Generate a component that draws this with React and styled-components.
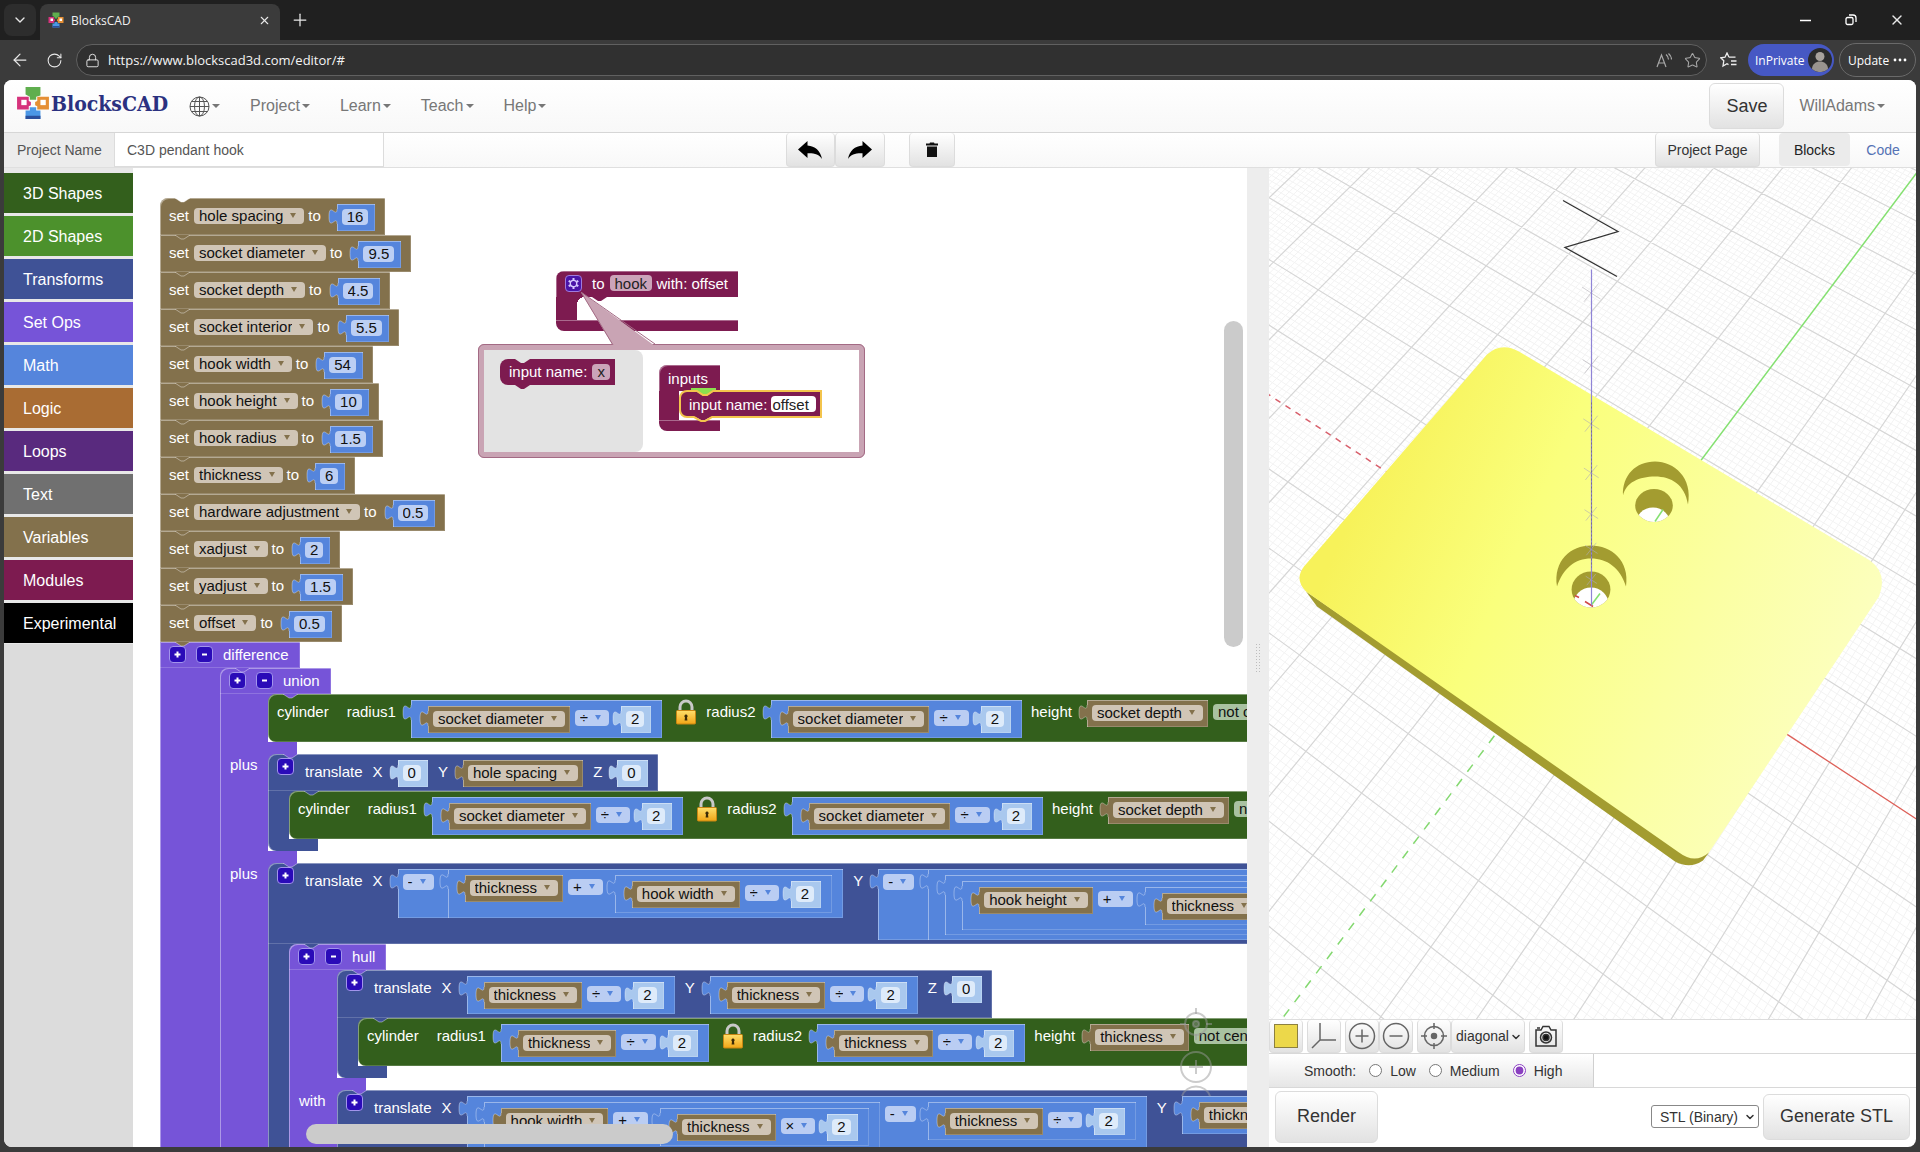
import React, {useState} from "react";
import styled, {createGlobalStyle, css} from "styled-components";
import {ArrowLeft, ChevronDown, Lock, Plus, RotateCw, Star, X} from "lucide-react";

const GlobalStyle = createGlobalStyle`
    * { box-sizing: border-box; }
    body { margin: 0; background: #3b3b3b; }
    body, button, input, select { font-family: "Liberation Sans", Arial, sans-serif; }
    button, input, select { margin: 0; }
`;

const COLORS = {
    variables: '#83714c',
    math: '#5585dc',
    shadow: '#a9c8ee',
    setops: '#7654d8',
    shapes: '#335f1c',
    transforms: '#3f5296',
    modules: '#7d1b50',
};

const CATEGORIES = [
    ['3D Shapes', '#335f1c'],
    ['2D Shapes', '#4c912c'],
    ['Transforms', '#3f5296'],
    ['Set Ops', '#7654d8'],
    ['Math', '#5585dc'],
    ['Logic', '#a96c33'],
    ['Loops', '#592a7e'],
    ['Text', '#707070'],
    ['Variables', '#83714c'],
    ['Modules', '#7d1b50'],
    ['Experimental', '#000000'],
];

const VARIABLES = [
    ['hole spacing', '16'],
    ['socket diameter', '9.5'],
    ['socket depth', '4.5'],
    ['socket interior', '5.5'],
    ['hook width', '54'],
    ['hook height', '10'],
    ['hook radius', '1.5'],
    ['thickness', '6'],
    ['hardware adjustment', '0.5'],
    ['xadjust', '2'],
    ['yadjust', '1.5'],
    ['offset', '0.5'],
];

/* ---------- browser window ---------- */

const Window = styled.div`
    display: flex;
    flex-direction: column;
    height: 100vh;
    background: #3b3b3b;
`;

const TabStrip = styled.div`
    display: flex;
    align-items: flex-end;
    height: 40px;
    flex: none;
    padding-left: 4px;
    background: #202020;
    color: #eee;
`;

const PlainButton = styled.button`
    display: flex;
    align-items: center;
    justify-content: center;
    width: ${props => props.$w || 32}px;
    height: ${props => props.$h || 32}px;
    flex: none;
    padding: 0;
    border: 0;
    border-radius: 8px;
    background: ${props => props.$bg || 'none'};
    color: #e8e8e8;
`;

const TabMenu = styled(PlainButton)`
    align-self: center;
    margin-right: 4px;
`;

const BrowserTab = styled.div`
    display: flex;
    align-items: center;
    width: 240px;
    height: 36px;
    padding: 0 4px 4px 8px;
    border-radius: 8px 8px 0 0;
    background: #3b3b3b;
    font: 12px "Open Sans", "Noto Sans", sans-serif;
    color: #f0f0f0;
`;

const TabTitle = styled.span`
    flex: 1;
    padding-left: 7px;
`;

const WindowButtons = styled.div`
    display: flex;
    align-items: center;
    height: 40px;
    margin-left: auto;
`;

const AddressRow = styled.div`
    display: flex;
    align-items: center;
    height: 40px;
    flex: none;
    padding: 0 4px;
    color: #e8e8e8;
`;

const AddressBar = styled.label`
    display: flex;
    align-items: center;
    flex: 1;
    height: 32px;
    margin: 0 1px 0 4px;
    padding: 0 0 0 8px;
    border: 1px solid #606060;
    border-radius: 16px;
    background: #303030;
`;

const Url = styled.input`
    flex: 1;
    min-width: 0;
    padding: 0 0 0 8px;
    border: 0;
    outline: 0;
    background: none;
    color: #f4f4f4;
    font: 13px "Open Sans", "Noto Sans", sans-serif;
`;

const Pill = styled.button`
    display: flex;
    align-items: center;
    justify-content: space-between;
    height: ${props => props.$h}px;
    width: ${props => props.$w}px;
    flex: none;
    margin-left: ${props => props.$ml || 0}px;
    padding: ${props => props.$pad};
    border: ${props => props.$border};
    border-radius: 17px;
    background: ${props => props.$bg};
    color: #fff;
    font: 12px "Open Sans", "Noto Sans", sans-serif;
    white-space: nowrap;
`;

const Page = styled.div`
    display: flex;
    flex-direction: column;
    flex: 1;
    min-height: 0;
    margin: 0 4px 5px;
    border-radius: 8px;
    overflow: hidden;
    background: #fff;
    color: #333;
`;

/* ---------- site bars ---------- */

const NavBar = styled.nav`
    display: flex;
    align-items: center;
    height: 53px;
    flex: none;
    padding: 0 16px 0 12px;
    border-bottom: 1px solid #d6d6d6;
    background: linear-gradient(#fff, #f8f8f8);
`;

const Brand = styled.a`
    display: flex;
    align-items: center;
    gap: 1px;
    margin-right: 6px;
    padding-bottom: 6px;
    color: #2b3180;
    text-decoration: none;
    font: bold 21px "DejaVu Serif Condensed", "DejaVu Serif", serif;
`;

const NavItem = styled.button`
    display: flex;
    align-items: center;
    gap: 2px;
    padding: 0 15px;
    border: 0;
    background: none;
    color: #777;
    font-size: 16px;
`;

const Caret = styled.span`
    border: 4px solid transparent;
    border-top-color: #777;
    border-bottom: 0;
`;

const Spacer = styled.div`
    flex: 1;
`;

const raised = css`
    border: 1px solid #dcdcdc;
    border-radius: 4px;
    background: linear-gradient(#fff, #e2e2e2);
    color: #333;
`;

const BigButton = styled.button`
    ${raised}
    height: ${props => props.$h}px;
    padding: 0 16px;
    border-radius: 6px;
    font-size: 18px;
    white-space: nowrap;
`;

const ProjectBar = styled.div`
    display: flex;
    align-items: stretch;
    height: 35px;
    flex: none;
    border-bottom: 1px solid #dfdfdf;
    background: linear-gradient(#fff, #f8f8f8);
    font-size: 14px;
`;

const ProjectLabel = styled.label`
    display: flex;
    align-items: center;
    width: 110px;
    padding-left: 13px;
    background: #ececec;
    color: #555;
`;

const ProjectInput = styled.input`
    width: 270px;
    padding: 0 12px;
    border: 1px solid #dcdcdc;
    border-top: 0;
    background: #fff;
    color: #555;
    font-size: 14px;
`;

const EditButtons = styled.div`
    display: flex;
    margin: 0 auto 0 21%;
`;

const BarButton = styled.button`
    ${raised}
    display: flex;
    align-items: center;
    justify-content: center;
    width: ${props => props.$w}px;
    height: 34px;
    margin-right: ${props => props.$mr || 0}px;
    padding: 0;
    border-top: 0;
    font-size: 14px;
`;

const ViewTab = styled.button`
    width: ${props => props.$w}px;
    height: 33px;
    padding: 0;
    border: 0;
    border-radius: 4px;
    background: ${props => props.$active ? '#ebebeb' : 'none'};
    color: ${props => props.$active ? '#222' : '#5573b5'};
    font-size: 14px;
`;

/* ---------- editor ---------- */

const Editor = styled.div`
    display: flex;
    flex: 1;
    min-height: 0;
`;

const Toolbox = styled.div`
    display: flex;
    flex-direction: column;
    gap: 3px;
    width: 129px;
    flex: none;
    padding-top: 5px;
    background: linear-gradient(#e8e8e8 476px, #dcdcdc 476px);
`;

const Category = styled.button`
    height: 40px;
    flex: none;
    padding: 2px 0 0 19px;
    border: 0;
    background: ${props => props.$color};
    color: #fff;
    font-size: 16px;
    text-align: left;
`;

const Workspace = styled.div`
    position: relative;
    flex: 1114 1 0;
    min-width: 0;
    overflow: hidden;
    background: #fff;
`;

const Splitter = styled.div`
    display: flex;
    align-items: center;
    justify-content: center;
    width: 22px;
    flex: none;
    background: #ededed;
`;

const Grip = styled.div`
    width: 6px;
    height: 30px;
    background: radial-gradient(circle, #bdbdbd 1px, transparent 1px) 0 0 / 3px 3px;
`;

const Scrollbar = styled.div`
    position: absolute;
    left: ${props => props.$x}px;
    top: ${props => props.$y}px;
    right: ${props => props.$right}px;
    bottom: ${props => props.$bottom}px;
    width: ${props => props.$w}px;
    height: ${props => props.$h}px;
    border-radius: 10px;
    background: #cbcbcb;
`;

const ZoomControls = styled.svg`
    position: absolute;
    right: 34px;
    bottom: 48px;
`;

/* ---------- blocks ---------- */

const edge = css`
    box-shadow: inset 1px 1px 0 rgba(255, 255, 255, .4), inset -1px -1px 0 rgba(255, 255, 255, .18);
`;

// a root block on the free canvas
const Placed = styled.div`
    position: absolute;
    left: ${props => props.$x}px;
    top: ${props => props.$y}px;
    display: flex;
    flex-direction: column;
    align-items: flex-start;
    color: #fff;
    font-size: 15px;
    white-space: nowrap;
`;

const Label = styled.span`
    margin: 6px 0 0 ${props => props.$ml ?? 10}px;
    line-height: 23px;
    color: #fff;
`;

const FieldBox = styled.span`
    position: relative;
    display: flex;
    height: 16px;
    margin: ${props => props.$mt ?? 10}px 0 0 ${props => props.$ml ?? 5}px;
    border-radius: 4px;
    background: ${props => props.$bg};
    color: ${props => props.$arrow};

    select, input {
        field-sizing: content;
        height: 16px;
        padding: 0 ${props => props.$arrow ? 21 : 5}px 0 5px;
        border: 0;
        border-radius: 4px;
        outline: 0;
        background: none;
        appearance: none;
        color: #111;
        font-size: 15px;
        line-height: 16px;
    }
`;

const Arrow = styled.span`
    position: absolute;
    right: 8px;
    top: 5px;
    border: 3px solid transparent;
    border-top: 5px solid currentColor;
    border-bottom: 0;
    pointer-events: none;
`;

const Value = styled.div`
    position: relative;
    display: flex;
    align-items: flex-start;
    min-height: 27px;
    margin: ${props => props.$flush ? 0 : 6}px 0 0 ${props => props.$ml ?? 15}px;
    padding: ${props => props.$pad};
    background: ${props => props.$color};
    ${edge}
`;

const TabShape = styled.svg`
    position: absolute;
    left: -8px;
    top: 5px;
    overflow: visible;
`;

const Statement = styled.div`
    position: relative;
    display: flex;
    align-items: flex-start;
    min-height: ${props => props.$h || 37}px;
    padding: 0 10px 4px 0;
    border-radius: ${props => props.$radius || '0'};
    background: ${props => props.$color};
    ${edge}
`;

const Header = styled(Statement)`
    padding: 0 11px 2px 9px;
    align-items: center;
    gap: 10px;
`;

const NotchShape = styled.svg`
    position: absolute;
    left: 15px;
    top: 0;
`;

const Column = styled.div`
    display: flex;
    flex-direction: column;
    align-items: flex-start;
`;

const Section = styled.div`
    display: flex;
`;

const Spine = styled.div`
    width: ${props => props.$w}px;
    flex: none;
    padding: 0 0 0 10px;
    background: ${props => props.$color};
    box-shadow: inset 1px 0 0 rgba(255, 255, 255, .4);
    line-height: 22px;
`;

const Mouth = styled.div`
    min-width: 29px;
    background: linear-gradient(${props => props.$color}, ${props => props.$color}) 0 0 / 10px 10px no-repeat;
`;

const Arm = styled.div`
    width: ${props => props.$w}px;
    height: 12px;
    border-radius: 0 0 0 ${props => props.$end ? 8 : 0}px;
    background: ${props => props.$color};
    box-shadow: inset 1px 0 0 rgba(255, 255, 255, .4);
`;

const RoundButton = styled.button`
    display: flex;
    align-items: center;
    justify-content: center;
    width: 17px;
    height: 17px;
    flex: none;
    margin: ${props => props.$m || 0};
    padding: 0;
    border: 1px solid #a294ec;
    border-radius: 4px;
    background: #2a0bb8;
`;

const PlusMinus = ({minus, m}) => (
    <RoundButton $m={m} aria-label={minus ? 'remove input' : 'add input'}>
        <svg width="9" height="9" viewBox="0 0 9 9">
            <path d={minus ? 'M2 4.5h5' : 'M1.5 4.5h6M4.5 1.5v6'} stroke="#fff" strokeWidth="2"/>
        </svg>
    </RoundButton>
);

const PuzzleTab = ({color}) => (
    <TabShape width="9" height="15" viewBox="0 0 9 15">
        <path d="M9 0H8c0 10-8-8-8 7.5s8-2.5 8 7.5h1z" fill={color}/>
        <path d="M8 0c0 10-8-8-8 7.5s8-2.5 8 7.5" fill="none" stroke="#fff" strokeOpacity=".35"/>
    </TabShape>
);

const Notch = ({fill}) => (
    <NotchShape width="16" height="5" viewBox="0 0 16 5">
        <path d="M0 0l6 4h3l6-4" fill={fill} stroke="#fff" strokeOpacity=".4"/>
    </NotchShape>
);

const Drop = ({value, name, bg, arrow, ml, mt}) => (
    <FieldBox $bg={bg} $arrow={arrow} $ml={ml} $mt={mt}>
        <select aria-label={name} defaultValue={value}>
            <option>{value}</option>
        </select>
        <Arrow/>
    </FieldBox>
);

const VarField = props => <Drop bg="#d0c5b6" arrow="#83714c" name="variable" {...props}/>;
const Op = props => <Drop bg="#bacdf3" arrow="#5585dc" name="operator" {...props}/>;

const Var = ({name, ml}) => (
    <Value $color={COLORS.variables} $ml={ml} $pad="0 5px 0 0">
        <PuzzleTab color={COLORS.variables}/>
        <VarField value={name} mt={5}/>
    </Value>
);

const Num = ({value, shadow, ml}) => {
    const color = shadow ? COLORS.shadow : COLORS.math;
    return (
        <Value $color={color} $ml={ml} $pad="0 7px 0 0">
            <PuzzleTab color={color}/>
            <FieldBox $bg={shadow ? '#deebfa' : '#bccff4'} $mt={5}>
                <input aria-label="number" defaultValue={value} size={value.length}/>
            </FieldBox>
        </Value>
    );
};

// children: left operand and right operand
const Math2 = ({op, ml, flush, children}) => {
    const [left, right] = React.Children.toArray(children);
    return (
        <Value $color={COLORS.math} $ml={ml} $flush={flush} $pad="0 11px 5px 2px">
            <PuzzleTab color={COLORS.math}/>
            {left}
            <Op value={op}/>
            {React.cloneElement(right, {ml: 12})}
        </Value>
    );
};

const Half = ({name, ml}) => (
    <Math2 op="÷" ml={ml}>
        <Var name={name}/>
        <Num value="2" shadow/>
    </Math2>
);

const Negate = ({children}) => (
    <Value $color={COLORS.math} $pad="0">
        <PuzzleTab color={COLORS.math}/>
        <Op value="-" mt={5}/>
        {React.cloneElement(children, {ml: 14, flush: true})}
    </Value>
);

const LockIcon = styled.svg`
    flex: none;
    margin: 5px 0 0 14px;
`;

const Padlock = () => (
    <LockIcon width="20" height="26" viewBox="0 0 20 26">
        <defs>
            <linearGradient id="lockBody" x1="0" y1="0" x2="0" y2="1">
                <stop offset="0" stopColor="#ffdf6b"/>
                <stop offset="1" stopColor="#f2a516"/>
            </linearGradient>
        </defs>
        <path d="M4 13V8a6 6 0 0 1 12 0v5" fill="none" stroke="#c9c9c9" strokeWidth="3"/>
        <rect x="0.5" y="11.5" width="19" height="13.5" rx="1" fill="url(#lockBody)" stroke="#c98613"/>
        <path d="M10 15.5a1.700 1.700 0 0 1 1 3l.4 3H8.600l.4-3a1.700 1.700 0 0 1 1-3z" fill="#3c2a06"/>
    </LockIcon>
);

const Cylinder = ({radius, height, notch}) => (
    <Statement $color={COLORS.shapes} $radius="8px 0 0 8px">
        <Notch fill={notch}/>
        <Label $ml={9}>cylinder</Label>
        <Label $ml={18}>radius1</Label>
        <Half name={radius}/>
        <Padlock/>
        <Label>radius2</Label>
        <Half name={radius}/>
        <Label $ml={9}>height</Label>
        <Var name={height}/>
        <Drop name="centering" value="not centered" bg="#a9c2a1" arrow={COLORS.shapes} mt={10}/>
    </Statement>
);

const SetOp = ({name, indent, sections, notch, radius}) => (
    <Column>
        <Header $color={COLORS.setops} $h={26} $radius={radius}>
            <Notch fill={notch}/>
            <PlusMinus/>
            <PlusMinus minus/>
            <span>{name}</span>
        </Header>
        {sections.map(([label, child], i) => (
            <React.Fragment key={i}>
                <Section>
                    <Spine $w={indent} $color={COLORS.setops}>{label}</Spine>
                    <Mouth $color={COLORS.setops}>{child}</Mouth>
                </Section>
                <Arm $w={indent + 29} $color={COLORS.setops}/>
            </React.Fragment>
        ))}
    </Column>
);

const Translate = ({x, y, z, children}) => (
    <Column>
        <Statement $color={COLORS.transforms} $radius="8px 0 0 0">
            <Notch fill={COLORS.setops}/>
            <PlusMinus m="4px 0 0 9px"/>
            <Label $ml={11}>translate</Label>
            <Label>X</Label>
            {x}
            <Label>Y</Label>
            {y}
            <Label>Z</Label>
            {z}
        </Statement>
        <Section>
            <Spine $w={21} $color={COLORS.transforms}/>
            <Mouth $color={COLORS.transforms}>{children}</Mouth>
        </Section>
        <Arm $w={50} $color={COLORS.transforms} $end/>
    </Column>
);

const Zero = () => <Num value="0" shadow/>;

const Hull = () => (
    <SetOp name="hull" indent={48} radius="8px 0 0 0" notch={COLORS.transforms} sections={[
        ['', (
            <Translate x={<Half name="thickness"/>} y={<Half name="thickness"/>} z={<Zero/>}>
                <Cylinder radius="thickness" height="thickness" notch={COLORS.transforms}/>
            </Translate>
        )],
        ['with', (
            <Translate
                x={(
                    <Math2 op="-">
                        <Math2 op="+">
                            <Var name="hook width"/>
                            <Math2 op="×">
                                <Var name="thickness"/>
                                <Num value="2" shadow/>
                            </Math2>
                        </Math2>
                        <Half name="thickness"/>
                    </Math2>
                )}
                y={<Half name="thickness"/>}
                z={<Zero/>}
            >
                <Cylinder radius="thickness" height="thickness" notch={COLORS.transforms}/>
            </Translate>
        )],
    ]}/>
);

const Union = () => (
    <SetOp name="union" indent={48} radius="8px 0 0 0" notch={COLORS.setops} sections={[
        ['', <Cylinder radius="socket diameter" height="socket depth" notch={COLORS.setops}/>],
        ['plus', (
            <Translate x={<Zero/>} y={<Var name="hole spacing"/>} z={<Zero/>}>
                <Cylinder radius="socket diameter" height="socket depth" notch={COLORS.transforms}/>
            </Translate>
        )],
        ['plus', (
            <Translate
                x={(
                    <Negate>
                        <Math2 op="+">
                            <Var name="thickness"/>
                            <Half name="hook width"/>
                        </Math2>
                    </Negate>
                )}
                y={(
                    <Negate>
                        <Math2 op="-">
                            <Math2 op="-">
                                <Math2 op="+">
                                    <Var name="hook height"/>
                                    <Half name="thickness"/>
                                </Math2>
                                <Num value="2" shadow/>
                            </Math2>
                            <Num value="2" shadow/>
                        </Math2>
                    </Negate>
                )}
                z={<Zero/>}
            >
                <Hull/>
            </Translate>
        )],
    ]}/>
);

const MainStack = () => (
    <Placed $x={27} $y={30}>
        {VARIABLES.map(([name, value], i) => (
            <Statement key={name} $color={COLORS.variables} $radius={i ? '0' : '8px 0 0 0'}>
                <Notch fill={i ? COLORS.variables : '#fff'}/>
                <Label $ml={9}>set</Label>
                <VarField value={name} ml={5}/>
                <Label $ml={4}>to</Label>
                <Num value={value} ml={16}/>
            </Statement>
        ))}
        <SetOp name="difference" indent={60} notch={COLORS.variables} sections={[['', <Union/>]]}/>
    </Placed>
);

/* ---------- module block and its mutator bubble ---------- */

const ModuleFrame = styled.div`
    display: flex;
    flex-direction: column;
    border-radius: 8px 0 0 8px;
    overflow: hidden;
`;

const ModuleHead = styled.div`
    display: flex;
    align-items: center;
    height: 26px;
    padding: 0 10px 2px 9px;
    background: ${COLORS.modules};
    box-shadow: inset 1px 1px 0 rgba(255, 255, 255, .35);
`;

const ModuleText = styled.span`
    margin-left: ${props => props.$ml || 0}px;
`;

const ModuleMouth = styled.div`
    height: ${props => props.$h}px;
    border-left: ${props => props.$w}px solid ${COLORS.modules};
    background: radial-gradient(circle at 8px 8px, #fff 8px, ${COLORS.modules} 8px) 0 0 / 8px 8px no-repeat, #fff;
`;

const ModuleFoot = styled.div`
    height: 11px;
    background: ${COLORS.modules};
    box-shadow: inset 0 1px 0 rgba(255, 255, 255, .35);
`;

const GearButton = styled(RoundButton)`
    border-color: #a07bdc;
    background: #4a14a8;
`;

const Tail = styled.svg`
    position: absolute;
    left: 448px;
    top: 124px;
`;

const Bubble = styled.div`
    position: absolute;
    left: 345px;
    top: 176px;
    display: flex;
    width: 387px;
    height: 114px;
    border: 6px solid #c9a4b4;
    border-radius: 6px;
    outline: 1px solid #a36a84;
    outline-offset: -1px;
    background: #fff;
    color: #fff;
    font-size: 15px;
    white-space: nowrap;
`;

const Flyout = styled.div`
    width: 159px;
    padding: 9px 0 0 16px;
    border-radius: 0 8px 8px 0;
    background: #e3e3e3;
`;

const MiniSpace = styled.div`
    padding: 15px 0 0 16px;
`;

const InputBlock = styled.div`
    position: relative;
    display: inline-flex;
    align-items: center;
    height: ${props => props.$selected ? 28 : 26}px;
    margin: ${props => props.$selected ? '-1px -110px 0 0' : '0'};
    padding: ${props => props.$selected ? '0 4px 0 8px' : '0 5px 1px 9px'};
    border: ${props => props.$selected ? '2px solid #f3c44c' : '0'};
    border-radius: 8px 0 0 8px;
    background: ${COLORS.modules};
`;

const InnerField = styled.input`
    width: ${props => props.$w}px;
    height: 16px;
    margin-left: ${props => props.$ml}px;
    padding: 0 ${props => props.$pad}px;
    border: 0;
    border-radius: 4px;
    outline: 0;
    background: ${props => props.$bg};
    color: #222;
    font-size: 15px;
`;

const BlockMark = styled.svg`
    position: absolute;
    left: ${props => props.$x}px;
    top: ${props => props.$y}px;
`;

const InputsFrame = styled.div`
    width: 61px;
    color: #fff;
`;

const InputsHead = styled(ModuleHead)`
    border-radius: 8px 0 0 0;
    padding: 0 0 0 9px;
`;

const InputsMouth = styled.div`
    height: 29px;
    border-left: 20px solid ${COLORS.modules};
`;

const InputsFoot = styled(ModuleFoot)`
    border-radius: 0 0 0 8px;
`;

const ModuleBlock = () => (
    <>
        <Placed $x={423} $y={103}>
            <ModuleFrame>
                <ModuleHead>
                    <GearButton aria-label="edit inputs">
                        <svg width="13" height="13" viewBox="0 0 13 13" fill="none" stroke="#d6c8ff">
                            <path d="M6.500 1v2M6.500 10v2M1.700 3.800l1.800 1M9.500 8.200l1.800 1M11.300 3.800l-1.800 1M3.500 8.200l-1.800 1" strokeWidth="2"/>
                            <circle cx="6.500" cy="6.500" r="3.200" strokeWidth="1.300"/>
                        </svg>
                    </GearButton>
                    <ModuleText $ml={10}>to</ModuleText>
                    <InnerField aria-label="module name" $w={42} $ml={5} $pad={5} $bg="#cba4b9" defaultValue="hook"/>
                    <ModuleText $ml={5}>with: offset</ModuleText>
                </ModuleHead>
                <ModuleMouth $w={21} $h={23}/>
                <ModuleFoot/>
            </ModuleFrame>
            <BlockMark $x={36} $y={25} width="16" height="6" viewBox="0 0 16 6">
                <path d="M0 0v1l6 4h3l6-4V0z" fill={COLORS.modules}/>
            </BlockMark>
        </Placed>
        <Bubble>
            <Flyout>
                <InputBlock>
                    <BlockMark $x={15} $y={0} width="16" height="5" viewBox="0 0 16 5">
                        <path d="M0 0l6 4h3l6-4z" fill="#e3e3e3"/>
                    </BlockMark>
                    <span>input name:</span>
                    <InnerField aria-label="new input name" $w={18} $ml={5} $pad={5} $bg="#cba4b9" defaultValue="x"/>
                    <BlockMark $x={15} $y={26} width="16" height="5" viewBox="0 0 16 5">
                        <path d="M0 0l6 4h3l6-4z" fill={COLORS.modules}/>
                    </BlockMark>
                </InputBlock>
            </Flyout>
            <MiniSpace>
                <InputsFrame>
                    <InputsHead>inputs</InputsHead>
                    <InputsMouth>
                        <InputBlock $selected>
                            <BlockMark $x={9} $y={-6} width="28" height="11" viewBox="0 0 28 11">
                                <path d="M1 2h25v4h-3l-6 4h-4L7 6H1z" fill="#8be04e"/>
                                <path d="M0 5h7l6 4h4l6-4h5" fill="none" stroke="#f3c44c" strokeWidth="2"/>
                            </BlockMark>
                            <span>input name:</span>
                            <InnerField aria-label="input name" $w={45} $ml={4} $pad={1} $bg="#fff" defaultValue="offset"/>
                            <BlockMark $x={13} $y={23} width="18" height="7" viewBox="0 0 18 7">
                                <path d="M0 0v1l7 4h4l7-4V0z" fill={COLORS.modules}/>
                                <path d="M0 2l7 4h4l7-4" fill="none" stroke="#f3c44c" strokeWidth="2"/>
                            </BlockMark>
                        </InputBlock>
                    </InputsMouth>
                    <InputsFoot/>
                </InputsFrame>
            </MiniSpace>
        </Bubble>
        <Tail width="76" height="54" viewBox="0 0 76 54">
            <path d="M0 0l32 54h42z" fill="#c9a4b4"/>
            <path d="M32 53L0 0l74 52" fill="none" stroke="#a36a84"/>
        </Tail>
    </>
);

/* ---------- 3D view ---------- */

const Side = styled.div`
    display: flex;
    flex-direction: column;
    flex: 647 1 0;
    min-width: 0;
`;

const Scene = styled.svg`
    display: block;
    width: 100%;
    flex: 1;
    min-height: 0;
    border-bottom: 1px solid #ddd;
`;

// ground plane to screen; grid units of ten
const project = (x, y) => {
    const px = 56 * x + 39.5 * y;
    const py = 36.7 * x - 52.65 * y;
    const w = 1 - 0.0004 * py;
    return `${(322.6 + px / w).toFixed(1)} ${(438.7 + py / w).toFixed(1)}`;
};

const gridPath = (from, to, step, skip) => {
    let d = '';
    for (let i = from; i <= to; i += step) {
        if (skip(i)) continue;
        const v = i / 10;
        if (v <= 8) d += `M${project(v, -8)}L${project(v, 12)}`;
        if (v >= -8) d += `M${project(-11, v)}L${project(8, v)}`;
    }
    return d;
};

const MINOR = gridPath(-110, 120, 1, i => i % 10 === 0);
const MAJOR = gridPath(-110, 120, 10, i => i === 0);
const TICKS = [1, 2, 3, 4, 5, 6, 7].map(z => ({y: 438.7 - 24.95 * z / (1 - 0.0633 * z), r: 5 + z * 0.6}));

const Viewer = () => (
    <Scene viewBox="0 0 647 852" preserveAspectRatio="xMidYMid slice">
        <defs>
            <linearGradient id="face" gradientUnits="userSpaceOnUse" x1="90" y1="330" x2="560" y2="540">
                <stop offset="0" stopColor="#f7f25a"/>
                <stop offset=".32" stopColor="#faff7c"/>
                <stop offset=".7" stopColor="#fbffa2"/>
                <stop offset="1" stopColor="#fcffbd"/>
            </linearGradient>
            <clipPath id="hole1"><ellipse cx="322" cy="422" rx="19.400" ry="18"/></clipPath>
            <clipPath id="hole2"><ellipse cx="385" cy="338" rx="18.800" ry="16.400"/></clipPath>
        </defs>
        <rect width="647" height="852" fill="#fff"/>
        <path d={MINOR} stroke="#f3f3f3" strokeWidth="1" fill="none"/>
        <path d={MAJOR} stroke="#d6d6d6" strokeWidth="1.200" fill="none"/>
        <path d={`M${project(0, 0)}L${project(0, 12)}`} stroke="#84e070" strokeWidth="1.500"/>
        <path d={`M${project(0, 0)}L${project(0, -6.8)}`} stroke="#84d870" strokeWidth="1.500" strokeDasharray="9 9"/>
        <path d={`M${project(0, 0)}L${project(8, 0)}`} stroke="#dd6058" strokeWidth="1.300"/>
        <path d={`M${project(0, 0)}L${project(-8, 0)}`} stroke="#d8606c" strokeWidth="1.500" strokeDasharray="6 6"/>
        <path d="M37 424L48 439L406 694Q421 702 434 693L440 685L410 680Z" fill="#a39c30"/>
        <path
            d="M35 399L218 187Q232 174 250 184L601 393Q619 406 610 429L440 685Q426 697 410 685L37 424Q25 412 35 399Z"
            fill="url(#face)"
        />
        <path d="M288 419C284 393 302 378 322 378S361 393 357 419C351 400 338 391 322 391S294 401 288 419Z" fill="#a39c30"/>
        <ellipse cx="322" cy="422" rx="19.400" ry="18" fill="#a39c30"/>
        <g clipPath="url(#hole1)">
            <ellipse cx="322" cy="438" rx="18" ry="18" fill="#fff"/>
            <path d="M322 438l9-12" stroke="#84e070" strokeWidth="1.500"/>
            <path d="M306 428l4 2M316 434l8 5" stroke="#d04848" strokeWidth="1.500"/>
        </g>
        <path d="M354 328C353 308 367 294 386 294S424 310 419 337C416 317 402 309 386 309S357 315 354 328Z" fill="#a39c30"/>
        <ellipse cx="385" cy="338" rx="18.800" ry="16.400" fill="#a39c30"/>
        <g clipPath="url(#hole2)">
            <ellipse cx="384" cy="357" rx="17.500" ry="17" fill="#fff"/>
            <path d="M386 354l8-12" stroke="#84e070" strokeWidth="1.500"/>
        </g>
        {TICKS.map(t => (
            <path
                key={t.y}
                d={`M${322.3 - t.r} ${t.y - t.r * 0.6}l${t.r * 2} ${t.r * 1.3}M${322.3 + t.r * 0.8} ${t.y - t.r}l${-t.r * 1.6} ${t.r * 2}`}
                stroke="#b0aeb4"
                strokeOpacity=".6"
            />
        ))}
        <path d="M322.500 102V438" stroke="#8f84d6" strokeWidth="1.200"/>
        <path d="M322.500 235V400" stroke="#77738a" strokeDasharray="2 2"/>
        <path d="M294 33L349 64L296 80L348 109" fill="none" stroke="#333" strokeWidth="1.300"/>
    </Scene>
);

const ToolRow = styled.div`
    display: flex;
    align-items: flex-start;
    height: 34px;
    flex: none;
    border-bottom: 1px solid #d8d8d8;
    background: #fff;
`;

const ToolButton = styled.button`
    ${raised}
    display: flex;
    align-items: center;
    justify-content: center;
    width: 34px;
    height: 33px;
    margin-right: ${props => props.$mr ?? 4}px;
    padding: 0;
    border-top: 0;
`;

const Swatch = styled.span`
    width: 24px;
    height: 24px;
    border: 1px solid #8c8040;
    background: #ecd84a;
`;

const SelectWrap = styled.span`
    position: relative;
    display: flex;
    margin-right: 4px;

    svg {
        position: absolute;
        right: 3px;
        top: calc(50% - 6px);
        pointer-events: none;
    }
`;

const ViewSelect = styled.select`
    ${raised}
    appearance: none;
    width: 74px;
    height: 33px;
    padding: 0 0 0 4px;
    border-top: 0;
    font-size: 14px;
`;

const FormatSelect = styled.select`
    appearance: none;
    width: 108px;
    height: 23px;
    padding: 0 0 0 8px;
    border: 1px solid #888;
    border-radius: 3px;
    background: #fff;
    color: #333;
    font-size: 14px;
`;

const SmoothLine = styled.div`
    flex: none;
    border-bottom: 1px solid #d8d8d8;
`;

const SmoothRow = styled.fieldset`
    display: flex;
    align-items: center;
    width: 325px;
    height: 33px;
    margin: 0;
    padding: 0 0 0 35px;
    border: 0;
    border-right: 1px solid #d0d0d0;
    background: linear-gradient(#fff, #e6e6e6);
    font-size: 14px;
`;

const RadioLabel = styled.label`
    display: flex;
    align-items: center;
    gap: 8px;
    margin-left: 13px;

    input {
        width: 13px;
        height: 13px;
        accent-color: #8a3fc0;
    }
`;

const RenderRow = styled.div`
    display: flex;
    align-items: center;
    height: 59px;
    flex: none;
    padding: 0 6px 2px;
`;

const RenderButton = styled(BigButton)`
    padding: 0 21px;
`;

/* ---------- drawings ---------- */

const LogoMark = ({size}) => (
    <svg width={size} height={size} viewBox="0 0 32 32">
        <path d="M9 1h14v8l-4 1v3h-6v-3L9 8z" fill="#5fae4e"/>
        <path d="M1 10h11v4l2 1v3l-2 1v3H1z" fill="#d6337c"/>
        <path d="M20 10h11v12H20v-3l-2-1v-3l2-1z" fill="#e58f35"/>
        <path d="M13 20h6v3h4v8H9v-8h4z" fill="#4b97e6"/>
        <path d="M9 28h14v3H9z" fill="#2b4f9c"/>
        <rect x="5" y="13" width="5" height="5" fill="#fff"/>
        <rect x="23" y="13" width="5" height="5" fill="#fff"/>
    </svg>
);

const Globe = () => (
    <svg width="21" height="21" viewBox="0 0 21 21" fill="none" stroke="#555" strokeWidth="1">
        <circle cx="10.500" cy="10.500" r="9.500"/>
        <ellipse cx="10.500" cy="10.500" rx="5" ry="9.500"/>
        <path d="M10.500 1v19M1 10.500h19M2.500 5.500h16M2.500 15.500h16"/>
    </svg>
);

const Undo = ({flip}) => (
    <svg width="24" height="18" viewBox="0 0 24 18">
        <path
            d="M0 8.500L9.500 0v4.500C17 5 22.500 9.500 24 18c-3-4.500-7-6-14.500-5.800V17z"
            transform={flip ? 'matrix(-1 0 0 1 24 0)' : undefined}
            fill="#000"
        />
    </svg>
);

const Trash = () => (
    <svg width="12" height="16" viewBox="0 0 12 16">
        <path d="M0 1.500h3.500L4 .500h4l.5 1H12v2H0zM1 4.500h10V15H1z" fill="#111"/>
    </svg>
);

const CircleIcon = ({children}) => (
    <svg width="28" height="28" viewBox="0 0 28 28" fill="none" stroke="#666" strokeWidth="1.500">
        {children}
    </svg>
);

export default function App() {
    const [name, setName] = useState('C3D pendant hook');
    const [smooth, setSmooth] = useState('High');

    return (
        <>
            <GlobalStyle/>
            <Window>
                <TabStrip>
                    <TabMenu $bg="#2d2d2d" aria-label="tab menu"><ChevronDown size={16}/></TabMenu>
                    <BrowserTab>
                        <LogoMark size={16}/>
                        <TabTitle>BlocksCAD</TabTitle>
                        <PlainButton $w={24} $h={24} aria-label="close tab"><X size={13}/></PlainButton>
                    </BrowserTab>
                    <PlainButton $w={40} $h={40} aria-label="new tab"><Plus size={20} strokeWidth={1.5}/></PlainButton>
                    <WindowButtons>
                        <PlainButton $w={46} aria-label="minimize">
                            <svg width="11" height="11"><path d="M0 5.500h11" stroke="#fff" strokeWidth="1.500"/></svg>
                        </PlainButton>
                        <PlainButton $w={46} aria-label="restore">
                            <svg width="12" height="12" fill="none" stroke="#fff" strokeWidth="1.300">
                                <rect x="1" y="3.500" width="7" height="7" rx="1.500"/>
                                <path d="M4 1h4a3 3 0 0 1 3 3v4"/>
                            </svg>
                        </PlainButton>
                        <PlainButton $w={46} aria-label="close"><X size={16}/></PlainButton>
                    </WindowButtons>
                </TabStrip>
                <AddressRow>
                    <PlainButton aria-label="back"><ArrowLeft size={20} strokeWidth={1.5}/></PlainButton>
                    <PlainButton $w={36} aria-label="reload"><RotateCw size={17} strokeWidth={1.5}/></PlainButton>
                    <AddressBar>
                        <Lock size={15} strokeWidth={1.5}/>
                        <Url aria-label="address" defaultValue="https://www.blockscad3d.com/editor/#"/>
                        <PlainButton $w={28} $h={28} aria-label="read aloud">
                            <svg width="16" height="15" fill="none" stroke="#a8a8a8" strokeWidth="1.200">
                                <path d="M1 14L5.500 2 10 14M2.500 10h6M10 1.500q2.500 2 2.500 5M12.500.500q3 2.500 3 6"/>
                            </svg>
                        </PlainButton>
                        <PlainButton $w={28} $h={28} aria-label="favorite"><Star size={17} color="#a8a8a8" strokeWidth={1.5}/></PlainButton>
                    </AddressBar>
                    <PlainButton $w={40} aria-label="favorites">
                        <svg width="17" height="16" viewBox="0 0 17 16" fill="none" stroke="#eee" strokeWidth="1.300">
                            <path d="M9 5.200h6.500M11 9h5.500M11 12.500h5.500M9 5.200L7 1 5 5.200l-4.200.6 3 3L3 14l4-2.200 1.500.8"/>
                        </svg>
                    </PlainButton>
                    <Pill $w={86} $h={32} $pad="0 2px 0 7px" $border="0" $bg="#4658c4">
                        InPrivate
                        <svg width="24" height="24">
                            <circle cx="12" cy="12" r="12" fill="#2b2b2b"/>
                            <circle cx="12" cy="8.500" r="4.500" fill="#a8a29c"/>
                            <path d="M4 21c0-10 16-10 16 0a12 12 0 0 1-16 0z" fill="#99938d"/>
                        </svg>
                    </Pill>
                    <Pill $w={77} $h={34} $ml={5} $pad="0 8px" $border="1px solid #6a6a6a" $bg="none">
                        Update
                        <svg width="14" height="4" fill="#fff">
                            <circle cx="2" cy="2" r="1.400"/><circle cx="7" cy="2" r="1.400"/><circle cx="12" cy="2" r="1.400"/>
                        </svg>
                    </Pill>
                </AddressRow>
                <Page>
                    <NavBar>
                        <Brand href="#">
                            <LogoMark size={34}/>
                            BlocksCAD
                        </Brand>
                        <NavItem aria-label="language"><Globe/><Caret/></NavItem>
                        {['Project', 'Learn', 'Teach', 'Help'].map(item => (
                            <NavItem key={item}>{item}<Caret/></NavItem>
                        ))}
                        <Spacer/>
                        <BigButton $h={46}>Save</BigButton>
                        <NavItem>WillAdams<Caret/></NavItem>
                    </NavBar>
                    <ProjectBar>
                        <ProjectLabel htmlFor="project">Project Name</ProjectLabel>
                        <ProjectInput id="project" value={name} onChange={e => setName(e.target.value)}/>
                        <EditButtons>
                            <BarButton $w={49} aria-label="undo"><Undo/></BarButton>
                            <BarButton $w={50} $mr={24} aria-label="redo"><Undo flip/></BarButton>
                            <BarButton $w={46} aria-label="delete"><Trash/></BarButton>
                        </EditButtons>
                        <BarButton $w={105} $mr={19}>Project Page</BarButton>
                        <ViewTab $w={71} $active>Blocks</ViewTab>
                        <ViewTab $w={66}>Code</ViewTab>
                    </ProjectBar>
                    <Editor>
                        <Toolbox>
                            {CATEGORIES.map(([label, color]) => (
                                <Category key={label} $color={color}>{label}</Category>
                            ))}
                        </Toolbox>
                        <Workspace>
                            <MainStack/>
                            <ModuleBlock/>
                            <ZoomControls width="34" height="92" viewBox="0 0 34 92" fill="none" stroke="#999" strokeOpacity=".5" strokeWidth="2">
                                <circle cx="17" cy="17" r="11"/>
                                <circle cx="17" cy="17" r="3" fill="#999" fillOpacity=".4"/>
                                <path d="M17 1v6M17 27v6M1 17h6M27 17h6"/>
                                <circle cx="17" cy="60" r="15"/>
                                <path d="M17 53v14M10 60h14"/>
                                <path d="M3 89A15 15 0 0 1 31 89"/>
                            </ZoomControls>
                            <Scrollbar $w={19} $h={326} $right={4} $y={153}/>
                            <Scrollbar $w={367} $h={20} $x={173} $bottom={3}/>
                        </Workspace>
                        <Splitter><Grip/></Splitter>
                        <Side>
                            <Viewer/>
                            <ToolRow>
                                <ToolButton aria-label="color"><Swatch/></ToolButton>
                                <ToolButton aria-label="axes">
                                    <CircleIcon><path d="M10 1v17M10 18h16M10 18L2 26"/></CircleIcon>
                                </ToolButton>
                                <ToolButton $mr={0} aria-label="zoom in">
                                    <CircleIcon><circle cx="14" cy="14" r="12.500"/><path d="M7.500 14h13M14 7.500v13"/></CircleIcon>
                                </ToolButton>
                                <ToolButton aria-label="zoom out">
                                    <CircleIcon><circle cx="14" cy="14" r="12.500"/><path d="M7.500 14h13"/></CircleIcon>
                                </ToolButton>
                                <ToolButton $mr={0} aria-label="reset view">
                                    <CircleIcon>
                                        <circle cx="14" cy="14" r="9.500"/>
                                        <circle cx="14" cy="14" r="2.500" fill="#666"/>
                                        <path d="M14 1v6M14 21v6M1 14h6M21 14h6"/>
                                    </CircleIcon>
                                </ToolButton>
                                <SelectWrap>
                                    <ViewSelect aria-label="view" defaultValue="diagonal">
                                        <option>diagonal</option>
                                        <option>top</option>
                                        <option>front</option>
                                    </ViewSelect>
                                    <ChevronDown size={12} strokeWidth={3}/>
                                </SelectWrap>
                                <ToolButton aria-label="screenshot">
                                    <svg width="22" height="24" viewBox="0 0 22 24" fill="none" stroke="#333" strokeWidth="1.500">
                                        <path d="M1 6h5l2-3.500h6L16 6h5v16H1z"/>
                                        <path d="M2 4h3"/>
                                        <circle cx="11" cy="13.500" r="5.500"/>
                                        <circle cx="11" cy="13.500" r="3" fill="#111"/>
                                    </svg>
                                </ToolButton>
                            </ToolRow>
                            <SmoothLine>
                                <SmoothRow>
                                    <span>Smooth:</span>
                                    {['Low', 'Medium', 'High'].map(level => (
                                        <RadioLabel key={level}>
                                            <input
                                                type="radio"
                                                name="smooth"
                                                checked={smooth === level}
                                                onChange={() => setSmooth(level)}
                                            />
                                            {level}
                                        </RadioLabel>
                                    ))}
                                </SmoothRow>
                            </SmoothLine>
                            <RenderRow>
                                <RenderButton $h={52}>Render</RenderButton>
                                <Spacer/>
                                <SelectWrap>
                                    <FormatSelect aria-label="format" defaultValue="STL (Binary)">
                                        <option>STL (Binary)</option>
                                        <option>STL (ASCII)</option>
                                    </FormatSelect>
                                    <ChevronDown size={12} strokeWidth={3}/>
                                </SelectWrap>
                                <BigButton $h={46}>Generate STL</BigButton>
                            </RenderRow>
                        </Side>
                    </Editor>
                </Page>
            </Window>
        </>
    );
}
